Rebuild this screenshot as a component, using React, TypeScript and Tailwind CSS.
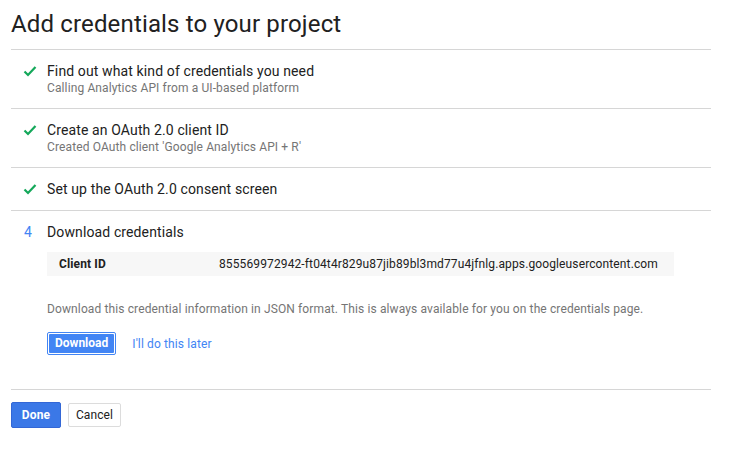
import React from "react";

const Check = () => (
  <svg width="14" height="12" viewBox="0 0 14 12" className="shrink-0">
    <path d="M1.5 6.5 L5 10 L12.5 2" fill="none" stroke="#14a85a" strokeWidth="2.2" />
  </svg>
);

export default function App() {
  return (
    <div className="w-[736px] h-[453px] bg-white text-[#212121] tracking-[0.12px]" style={{ fontFamily: "Roboto, 'Liberation Sans', sans-serif" }}>
      <div className="pl-[11px] w-[711px]">
        <h1 className="text-[24px] leading-[30px] pt-[9px] pb-[10px] text-[#212121] tracking-[0.15px]">Add credentials to your project</h1>
        <div className="border-t border-[#d6d6d6]" />
        <div className="flex pt-[12px] h-[58px]">
          <div className="w-[36px] pl-[12px] pt-[3px]"><Check /></div>
          <div>
            <div className="text-[14px] leading-[18px]">Find out what kind of credentials you need</div>
            <div className="text-[12px] leading-[16px] text-[#757575]">Calling Analytics API from a UI-based platform</div>
          </div>
        </div>
        <div className="border-t border-[#d6d6d6]" />
        <div className="flex pt-[12px] h-[58px]">
          <div className="w-[36px] pl-[12px] pt-[3px]"><Check /></div>
          <div>
            <div className="text-[14px] leading-[18px]">Create an OAuth 2.0 client ID</div>
            <div className="text-[12px] leading-[16px] text-[#757575]">Created OAuth client 'Google Analytics API + R'</div>
          </div>
        </div>
        <div className="border-t border-[#d6d6d6]" />
        <div className="flex pt-[12px] h-[42px]">
          <div className="w-[36px] pl-[12px] pt-[3px]"><Check /></div>
          <div className="text-[14px] leading-[18px]">Set up the OAuth 2.0 consent screen</div>
        </div>
        <div className="border-t border-[#d6d6d6]" />
        <div className="flex pt-[12px]">
          <div className="w-[36px] pl-[13px] text-[14px] leading-[18px] text-[#4285f4]">4</div>
          <div className="flex-1">
            <div className="text-[14px] leading-[18px]">Download credentials</div>
            <div className="mt-[11px] w-[627px] h-[24px] bg-[#f7f7f7] flex items-center text-[12px]">
              <div className="w-[172px] pl-[12px] font-bold">Client ID</div>
              <div>855569972942-ft04t4r829u87jib89bl3md77u4jfnlg.apps.googleusercontent.com</div>
            </div>
            <div className="mt-[25px] text-[12px] leading-[16px] text-[#757575]">Download this credential information in JSON format. This is always available for you on the credentials page.</div>
            <div className="mt-[15px] flex items-center gap-[16px]">
              <button className="h-[23px] px-[1px] py-[1px] border border-[#4285f4] rounded-[2px] bg-white">
                <span className="block h-[19px] leading-[19px] px-[6px] bg-[#4285f4] text-white text-[12px] font-bold rounded-[1px] tracking-normal">Download</span>
              </button>
              <span className="text-[12px] text-[#4285f4]">I'll do this later</span>
            </div>
          </div>
        </div>
        <div className="mt-[34px] border-t border-[#d6d6d6]" />
        <div className="flex gap-[7px] pt-[12px] items-center">
          <button className="h-[26px] w-[50px] bg-[#3b78e7] border border-[#3367d6] rounded-[2px] text-white text-[12px] font-bold">Done</button>
          <button className="h-[24px] w-[53px] bg-white border border-[#dcdcdc] rounded-[2px] text-[#212121] text-[12px]">Cancel</button>
        </div>
      </div>
    </div>
  );
}
